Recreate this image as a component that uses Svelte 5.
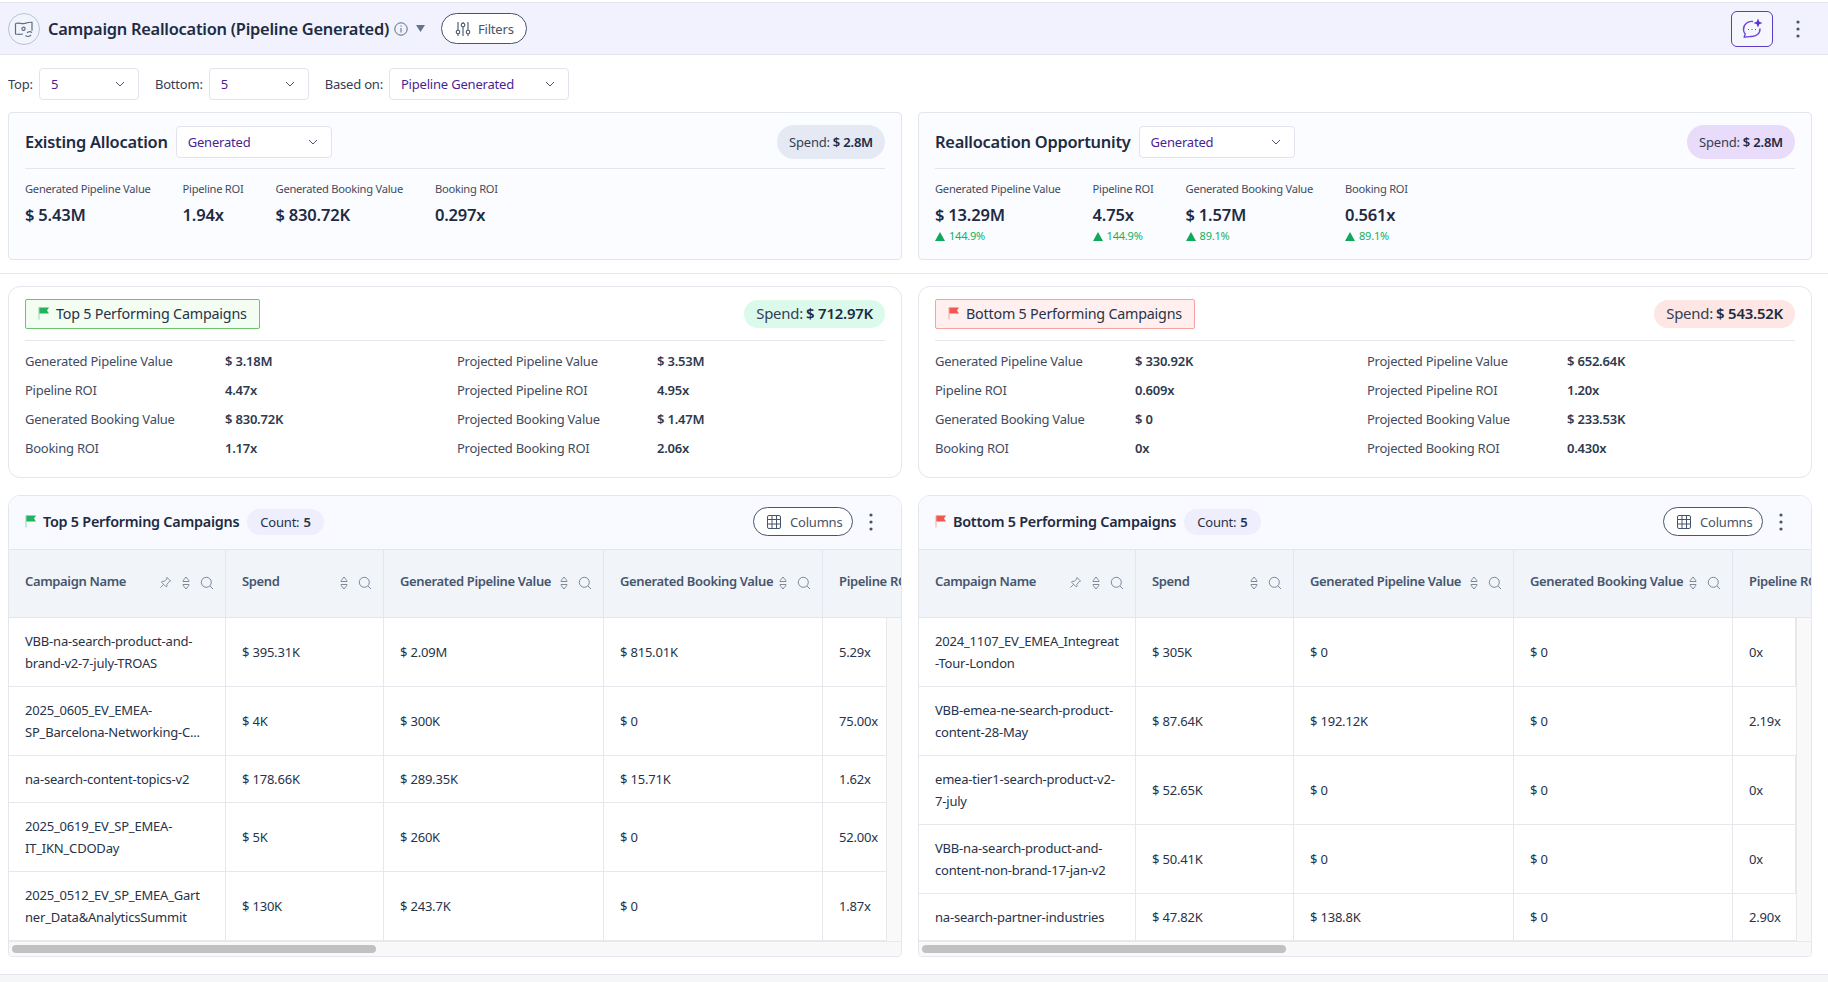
<script>
  const ex = [
    { l: 'Generated Pipeline Value', v: '$ 5.43M' },
    { l: 'Pipeline ROI', v: '1.94x' },
    { l: 'Generated Booking Value', v: '$ 830.72K' },
    { l: 'Booking ROI', v: '0.297x' }
  ];
  const re = [
    { l: 'Generated Pipeline Value', v: '$ 13.29M', d: '144.9%' },
    { l: 'Pipeline ROI', v: '4.75x', d: '144.9%' },
    { l: 'Generated Booking Value', v: '$ 1.57M', d: '89.1%' },
    { l: 'Booking ROI', v: '0.561x', d: '89.1%' }
  ];
  const alloc = [
    { title: 'Existing Allocation', spendCls: 'blue', metrics: ex },
    { title: 'Reallocation Opportunity', spendCls: 'violet', metrics: re }
  ];
  const perf = [
    {
      name: 'Top 5 Performing Campaigns', tone: 'good', spend: '$ 712.97K',
      a: [['Generated Pipeline Value', '$ 3.18M'], ['Pipeline ROI', '4.47x'], ['Generated Booking Value', '$ 830.72K'], ['Booking ROI', '1.17x']],
      b: [['Projected Pipeline Value', '$ 3.53M'], ['Projected Pipeline ROI', '4.95x'], ['Projected Booking Value', '$ 1.47M'], ['Projected Booking ROI', '2.06x']],
      rows: [
        ['VBB-na-search-product-and-\nbrand-v2-7-july-TROAS', '$ 395.31K', '$ 2.09M', '$ 815.01K', '5.29x'],
        ['2025_0605_EV_EMEA-\nSP_Barcelona-Networking-C...', '$ 4K', '$ 300K', '$ 0', '75.00x'],
        ['na-search-content-topics-v2', '$ 178.66K', '$ 289.35K', '$ 15.71K', '1.62x'],
        ['2025_0619_EV_SP_EMEA-\nIT_IKN_CDODay', '$ 5K', '$ 260K', '$ 0', '52.00x'],
        ['2025_0512_EV_SP_EMEA_Gart\nner_Data&AnalyticsSummit', '$ 130K', '$ 243.7K', '$ 0', '1.87x']
      ]
    },
    {
      name: 'Bottom 5 Performing Campaigns', tone: 'bad', spend: '$ 543.52K',
      a: [['Generated Pipeline Value', '$ 330.92K'], ['Pipeline ROI', '0.609x'], ['Generated Booking Value', '$ 0'], ['Booking ROI', '0x']],
      b: [['Projected Pipeline Value', '$ 652.64K'], ['Projected Pipeline ROI', '1.20x'], ['Projected Booking Value', '$ 233.53K'], ['Projected Booking ROI', '0.430x']],
      rows: [
        ['2024_1107_EV_EMEA_Integreat\n-Tour-London', '$ 305K', '$ 0', '$ 0', '0x'],
        ['VBB-emea-ne-search-product-\ncontent-28-May', '$ 87.64K', '$ 192.12K', '$ 0', '2.19x'],
        ['emea-tier1-search-product-v2-\n7-july', '$ 52.65K', '$ 0', '$ 0', '0x'],
        ['VBB-na-search-product-and-\ncontent-non-brand-17-jan-v2', '$ 50.41K', '$ 0', '$ 0', '0x'],
        ['na-search-partner-industries', '$ 47.82K', '$ 138.8K', '$ 0', '2.90x']
      ]
    }
  ];
  const cols = [
    { t: 'Campaign Name', pin: true, sort: true, search: true },
    { t: 'Spend', sort: true, search: true },
    { t: 'Generated Pipeline Value', sort: true, search: true },
    { t: 'Generated Booking Value', sort: true, search: true },
    { t: 'Pipeline ROI' }
  ];
</script>

{#snippet chev()}
  <svg class="chev" viewBox="0 0 12 12" width="12" height="12"><path d="M2 4l4 4 4-4" fill="none" stroke="#4b5a70" stroke-width="1"/></svg>
{/snippet}

{#snippet flag(tone)}
  <svg class="flag" viewBox="0 0 11 13" width="11" height="13"><path d="M1 .5h10L9 3.500l2 3H1z" fill={tone === 'good' ? '#22b35e' : '#f0574f'}/><path d="M.5 .5h1v12h-1z" fill={tone === 'good' ? '#8fd9ae' : '#f8aaa6'}/></svg>
{/snippet}

{#snippet kebab()}
  <svg viewBox="0 0 4 18" width="4" height="18"><circle cx="2" cy="2" r="1.6" fill="#475569"/><circle cx="2" cy="9" r="1.6" fill="#475569"/><circle cx="2" cy="16" r="1.6" fill="#475569"/></svg>
{/snippet}

<div class="page">
  <header class="head">
    <span class="logo">
      <svg viewBox="0 0 20 20" width="20" height="20" fill="none" stroke="#5c6d84" stroke-width="1.200">
        <path d="M1.500 4.500c3-1.400 6 .8 9 0 2-.6 4.500-1.500 7.500-1.200v8.500"/>
        <path d="M1.500 4.500v10.500c2.500.6 5 .5 7.500 0"/>
        <circle cx="9.500" cy="9.800" r="1.600"/>
        <path d="M5 8v.1M14 7v.1"/>
        <path d="M11.500 16.500c1.800 1.600 4.200 1.200 5.500-.6M18 13.500c-1.700-1.300-3.800-1-5 .4"/>
      </svg>
    </span>
    <h1>Campaign Reallocation (Pipeline Generated)</h1>
    <svg class="info" viewBox="0 0 14 14" width="14" height="14" fill="none" stroke="#5a6a80"><circle cx="7" cy="7" r="6.200"/><path d="M7 6v4.500M7 3.500v1.200"/></svg>
    <svg class="caret" viewBox="0 0 9 7" width="9" height="7"><path d="M0 0h9L4.500 7z" fill="#64748b"/></svg>
    <button class="pill filters">
      <svg viewBox="0 0 16 16" width="16" height="16" fill="none" stroke="#475569" stroke-width="1.100">
        <path d="M3 1v8M3 13v2M8 1v1M8 6v9M13 1v8M13 13v2"/>
        <circle cx="3" cy="11" r="1.800"/><circle cx="8" cy="4" r="1.800"/><circle cx="13" cy="11" r="1.800"/>
      </svg>
      Filters
    </button>
    <span class="spacer"></span>
    <button class="chat">
      <svg viewBox="0 0 24 24" width="24" height="24" fill="none" stroke="#6a45d8" stroke-width="1.400">
        <path d="M13 4.500a8 8 0 0 0-9.500 8c0 2 .7 3.400 1.700 4.500l-1 3c3 .3 5-.4 6.500-.6 5.500.5 9.500-3 9.300-7.900"/>
        <path d="M8 12.500h1M11.500 12.500h1M15 12.500h1" stroke-width="1.200"/>
        <path d="M18 1.500l1.300 3.200 3.200 1.300-3.200 1.300-1.300 3.200-1.300-3.200L13.500 6l3.200-1.300z" fill="#5b34d6" stroke="none"/>
      </svg>
    </button>
    <span class="headkebab">{@render kebab()}</span>
  </header>

  <div class="controls">
    <span class="lab">Top:</span>
    <span class="select w100">5 {@render chev()}</span>
    <span class="lab second">Bottom:</span>
    <span class="select w100">5 {@render chev()}</span>
    <span class="lab second">Based on:</span>
    <span class="select w180">Pipeline Generated {@render chev()}</span>
  </div>

  <section class="two alloc">
    {#each alloc as c}
      <div class="card allocCard">
        <div class="cardHead">
          <h2>{c.title}</h2>
          <span class="select w156">Generated {@render chev()}</span>
          <span class="spacer"></span>
          <span class="spend {c.spendCls}">Spend: <b>$ 2.8M</b></span>
        </div>
        <div class="metrics">
          {#each c.metrics as m}
            <div class="metric">
              <div class="mLabel">{m.l}</div>
              <div class="mValue">{m.v}</div>
              {#if m.d}
                <div class="delta"><svg viewBox="0 0 10 9" width="10" height="9"><path d="M5 0l5 9H0z" fill="#12a85a"/></svg>{m.d}</div>
              {/if}
            </div>
          {/each}
        </div>
      </div>
    {/each}
  </section>

  <hr class="rule" />

  <section class="two perf">
    {#each perf as p}
      <div class="card perfCard">
        <div class="perfHead">
          <span class="tag {p.tone}">{@render flag(p.tone)}{p.name}</span>
          <span class="spacer"></span>
          <span class="spend big {p.tone}">Spend: <b>{p.spend}</b></span>
        </div>
        <div class="kv">
          {#each [p.a, p.b] as group}
            <div class="kvCol">
              {#each group as g}
                <span class="k">{g[0]}</span><span class="v">{g[1]}</span>
              {/each}
            </div>
          {/each}
        </div>
      </div>
    {/each}
  </section>

  <section class="two tables">
    {#each perf as p}
      <div class="card tableCard">
        <div class="tHead">
          {@render flag(p.tone)}
          <h3>{p.name}</h3>
          <span class="count">Count: <b>5</b></span>
          <span class="spacer"></span>
          <button class="pill columns">
            <svg viewBox="0 0 16 16" width="16" height="16" fill="none" stroke="#475569"><rect x="1.500" y="1.500" width="13" height="13" rx="1.500"/><path d="M1.500 5.500h13M1.500 10h13M6 1.500v13M10.500 1.500v13"/></svg>
            Columns
          </button>
          <span class="tKebab">{@render kebab()}</span>
        </div>
        <div class="thead grid">
          {#each cols as c}
            <div class="th">
              <span class="thT">{c.t}</span>
              <span class="thI">
                {#if c.pin}
                  <svg viewBox="0 0 14 14" width="13" height="13" fill="none" stroke="#7b8899"><path d="M8.500 1.500l4 4-1.500.5-2.500 3 .2 2-1 .7-5-5 .7-1 2 .2 3-2.500zM5 9l-3.500 3.500"/></svg>
                {/if}
                {#if c.sort}
                  <svg viewBox="0 0 10 14" width="10" height="14" fill="none" stroke="#7b8899"><path d="M2 5.500c0-1.500 2-3 3-4.500 1 1.500 3 3 3 4.500zM2 8.500c0 1.500 2 3 3 4.500 1-1.500 3-3 3-4.500z"/></svg>
                {/if}
                {#if c.search}
                  <svg viewBox="0 0 14 14" width="14" height="14" fill="none" stroke="#7b8899"><circle cx="6.300" cy="6.300" r="5"/><path d="M10 10l3 3"/></svg>
                {/if}
              </span>
            </div>
          {/each}
        </div>
        <div class="bodyWrap">
          <div class="tbody">
            {#each p.rows as r}
              <div class="tr grid">
                {#each r as cell}
                  <div class="td">{cell}</div>
                {/each}
              </div>
            {/each}
          </div>
          <div class="vgutter"></div>
        </div>
        <div class="hbar"><span class="thumb"></span></div>
      </div>
    {/each}
  </section>

  <div class="foot"></div>
</div>

<style>
  :global(body) { margin: 0; background: #fff; }
  .page { width: 1828px; height: 982px; overflow: hidden; font-family: "Noto Sans", sans-serif; font-size: 13px; letter-spacing: -0.2px; color: #26334a; display: flex; flex-direction: column; }
  .spacer { flex: 1; }
  button { font: inherit; letter-spacing: inherit; cursor: pointer; }
  .head { margin-top: 2px; height: 53px; box-sizing: border-box; background: #f1f2fd; border-top: 1px solid #e3e5ee; border-bottom: 1px solid #e3e5ee; display: flex; align-items: center; padding: 0 28px 0 8px; }
  .logo { width: 32px; height: 32px; box-sizing: border-box; border: 1px solid #b7c4d3; border-radius: 50%; display: flex; align-items: center; justify-content: center; background: #f1f4fb; }
  h1 { margin: 0 0 0 8px; font-size: 16.400px; font-weight: 600; color: #1e2b42; letter-spacing: -0.250px; }
  .info { margin-left: 5px; }
  .caret { margin-left: 8px; }
  .pill { display: flex; align-items: center; border: 1px solid #45566e; border-radius: 16px; background: #fff; color: #475569; }
  .filters { margin-left: 16px; width: 86px; height: 31px; padding: 0 0 0 13px; gap: 7px; }
  .chat { width: 42px; height: 36px; border: 1px solid #5b3cc4; border-radius: 6px; background: #f6f6fe; display: flex; align-items: center; justify-content: center; padding: 0; }
  .headkebab { margin-left: 23px; display: flex; }

  .controls { display: flex; align-items: center; padding: 13px 8px 12px; }
  .lab { color: #344054; margin-right: 6px; }
  .lab.second { margin-left: 16px; }
  .select { box-sizing: border-box; height: 32px; border: 1px solid #e1e4ec; border-radius: 4px; background: #fff; color: #4a1f96; display: flex; align-items: center; justify-content: space-between; padding: 0 12px 0 11px; }
  .w100 { width: 100px; }
  .w180 { width: 180px; }
  .w156 { width: 156px; margin-left: 8px; }

  .two { display: grid; grid-template-columns: 894px 894px; gap: 16px; padding: 0 8px; }
  .card { box-sizing: border-box; border: 1px solid #e3e6ed; }
  .allocCard { height: 148px; border-radius: 4px; background: #fbfcff; padding: 13px 16px 0; }
  .cardHead { display: flex; align-items: center; height: 43px; padding-bottom: 10px; box-sizing: border-box; border-bottom: 1px solid #e3e6ed; }
  h2 { margin: 0 0 2px; font-size: 16.400px; font-weight: 600; color: #1e2b42; letter-spacing: -0.250px; }
  .spend { height: 34px; box-sizing: border-box; padding: 0 12px; border-radius: 17px; display: flex; align-items: center; gap: 3px; color: #344054; }
  .spend b { font-weight: 600; color: #1e2b42; }
  .spend.blue { background: #e4e9f4; }
  .spend.violet { background: #e9dbfa; }
  .metrics { display: flex; gap: 32px; padding-top: 10px; }
  .mLabel { font-size: 11.150px; color: #3f4c60; line-height: 20px; white-space: nowrap; letter-spacing: -0.250px; }
  .mValue { font-size: 16.500px; font-weight: 600; color: #1e2b42; line-height: 28px; margin-top: 2px; }
  .delta { font-size: 11px; color: #12b05f; display: flex; align-items: center; gap: 4px; line-height: 14px; }

  .rule { border: 0; border-top: 1px solid #e3e6ed; margin: 13px 0 12px; width: 100%; }

  .perfCard { height: 192px; border-radius: 12px; padding: 12px 16px 0; }
  .perfHead { display: flex; align-items: flex-start; height: 42px; box-sizing: border-box; border-bottom: 1px solid #e3e6ed; }
  .tag { height: 30px; box-sizing: border-box; border: 1px solid #6cc46c; background: #f4fdf1; border-radius: 2px; display: flex; align-items: center; padding: 0 12px 2px; gap: 7px; font-size: 14.300px; color: #26334a; }
  .tag.bad { border-color: #f7a3a0; background: #fff0ef; }
  .spend.big { height: 28px; font-size: 14.900px; margin-top: 1px; padding-bottom: 2px; }
  .spend.good { background: #dcfaec; }
  .spend.bad { background: #fde6e3; }
  .kv { display: grid; grid-template-columns: 432px 1fr; padding-top: 5px; }
  .kvCol { display: grid; grid-template-columns: 200px 1fr; grid-auto-rows: 29px; align-items: center; }
  .k { color: #3f4c60; letter-spacing: -0.250px; }
  .v { font-weight: 600; color: #2d3a4f; }

  .tables { margin-top: 17px; }
  .tableCard { height: 462px; border-radius: 12px 12px 4px 4px; overflow: hidden; display: flex; flex-direction: column; }
  .tHead { height: 51px; flex: none; background: #f9faff; display: flex; align-items: center; padding: 0 28px 2px 16px; border-bottom: 1px solid #e3e6ed; box-sizing: content-box; }
  .tHead .flag { margin-right: 7px; }
  h3 { margin: 0; font-size: 14.400px; font-weight: 600; color: #1e2b42; letter-spacing: -0.250px; }
  .count { margin-left: 8px; height: 26px; padding: 0 13px; border-radius: 13px; background: #eeeefd; display: flex; align-items: center; gap: 4px; }
  .count b { font-weight: 600; }
  .columns { width: 100px; height: 29px; padding: 0 0 0 12px; gap: 8px; }
  .tKebab { margin-left: 16px; display: flex; }
  .grid { display: grid; grid-template-columns: 217px 158px 220px 219px 1fr; }
  .thead { height: 68px; flex: none; background: #f1f4f9; border-bottom: 1px solid #e3e6ed; box-sizing: border-box; overflow: hidden; }
  .th { display: flex; align-items: center; justify-content: space-between; padding: 0 11px 0 16px; border-right: 1px solid #e3e6ed; font-weight: 600; color: #46566e; white-space: nowrap; overflow: hidden; letter-spacing: -0.350px; }
  .th:last-child { border-right: 0; padding-right: 0; }
  .thT { margin-bottom: 5px; }
  .thI { display: flex; align-items: center; gap: 9px; margin-bottom: 2px; }
  .bodyWrap { display: flex; flex: none; }
  .tbody { flex: 1; min-width: 0; }
  .vgutter { width: 15px; background: #f9f9f9; border-left: 1px solid #e8e8e8; box-sizing: border-box; }
  .tr { border-bottom: 1px solid #e6e8ee; box-sizing: border-box; }
  .td { padding: 12px 16px; line-height: 22px; white-space: pre-line; border-right: 1px solid #e6e8ee; display: flex; align-items: center; color: #26334a; }
  .hbar { flex: 1; background: #f8f8f8; border-top: 1px solid #e8e8e8; padding: 3px 3px; box-sizing: border-box; }
  .thumb { display: block; height: 8px; width: 364px; background: #c1c1c1; border-radius: 4px; }

  .foot { margin-top: 17px; flex: 1; border-top: 1px solid #e3e6ed; background: #f5f6f8; }
</style>
